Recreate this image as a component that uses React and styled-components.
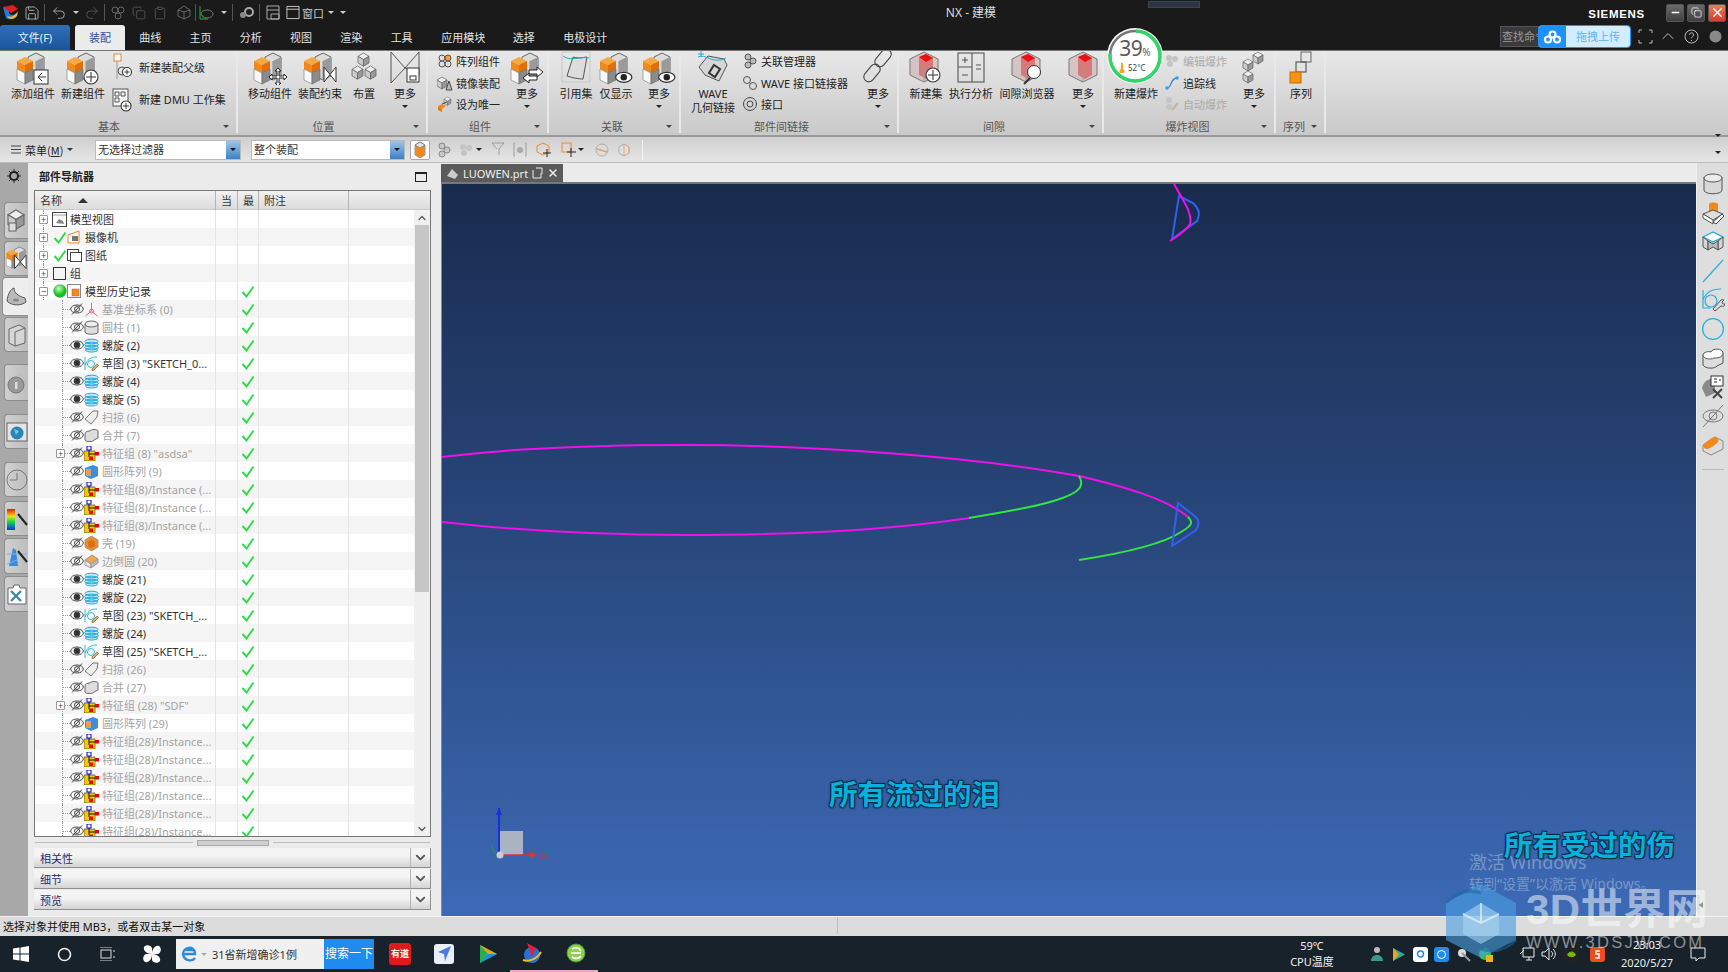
import React from "react";
import styled, { createGlobalStyle } from "styled-components";
import { Save, Undo2, Redo2, Copy, Clipboard, X, Minus, ChevronUp, ChevronDown } from "lucide-react";

const FONT = `"Noto Sans", "Noto Sans CJK SC", sans-serif`;

const Global = createGlobalStyle`
  html, body { margin: 0; padding: 0; background: #1a1a1a; }
  * { box-sizing: border-box; }
  body { font-family: ${FONT}; font-size: 11px; }
`;

const Page = styled.div`
  position: relative;
  width: 1728px;
  height: 972px;
  overflow: hidden;
  display: flex;
  flex-direction: column;
`;

/* ---------- title bar ---------- */
const TitleBar = styled.div`
  height: 25px;
  background: #1a1a1a;
  display: flex;
  align-items: center;
  color: #eee;
  position: relative;
`;
const Quick = styled.div`
  width: ${(p) => p.$w}px;
  height: 25px;
  flex: none;
  display: flex;
  align-items: center;
  justify-content: center;
  color: ${(p) => p.$color || "#8c8c8c"};
  font-size: 11px;
`;
const QuickSep = styled.div`
  width: 1px;
  height: 17px;
  background: #555;
  flex: none;
`;
const Caret = styled.span`
  display: inline-block;
  width: 0;
  height: 0;
  border-left: 3px solid transparent;
  border-right: 3px solid transparent;
  border-top: 3px solid ${(p) => p.$color || "#ccc"};
`;
const AppTitle = styled.div`
  position: absolute;
  left: 935px;
  top: 3px;
  width: 72px;
  text-align: center;
  font-size: 12px;
  color: #ddd;
`;
const TinyMeter = styled.div`
  position: absolute;
  left: 1148px;
  top: 1px;
  width: 52px;
  height: 7px;
  background: #2b3440;
  border: 1px solid #3b4652;
`;
const RightTitle = styled.div`
  margin-left: auto;
  display: flex;
  align-items: center;
  padding-right: 2px;
`;
const Brand = styled.div`
  font-family: "Liberation Sans", sans-serif;
  font-weight: 700;
  font-size: 11.5px;
  letter-spacing: 0.7px;
  color: #fff;
  margin-right: 18px;
  margin-top: 3px;
`;
const WinBtn = styled.div`
  width: 18px;
  height: 18px;
  margin-left: 3px;
  border-radius: 2px;
  background: ${(p) => (p.$close ? "linear-gradient(#f07a5a,#d0402a)" : "linear-gradient(#6a6a6a,#3f3f3f)")};
  border: 1px solid #555;
  display: flex;
  align-items: center;
  justify-content: center;
  color: #fff;
`;

/* ---------- tabs ---------- */
const TabRow = styled.div`
  height: 25px;
  background: #1a1a1a;
  display: flex;
  align-items: stretch;
`;
const FileTab = styled.div`
  width: 70px;
  padding-bottom: 2px;
  background: linear-gradient(#2f6fb8, #1c5498);
  border-radius: 3px 3px 0 0;
  color: #e8f0fa;
  display: flex;
  align-items: center;
  justify-content: center;
  font-size: 11px;
`;
const Tab = styled.div`
  width: ${(p) => p.$w || 50.3}px;
  margin-left: ${(p) => p.$ml || 0}px;
  padding-bottom: 2px;
  display: flex;
  align-items: center;
  justify-content: center;
  font-size: 11px;
  color: ${(p) => (p.$active ? "#2a4f96" : "#e4e4e4")};
  background: ${(p) => (p.$active ? "#ececec" : "transparent")};
  border-radius: 3px 3px 0 0;
`;
const SearchCmd = styled.div`
  position: absolute;
  left: 1500px;
  top: 26px;
  width: 40px;
  height: 21px;
  background: #3a3a3a;
  border: 1px solid #555;
  color: #999;
  font-size: 11px;
  line-height: 19px;
  padding-left: 1px;
  overflow: hidden;
  white-space: nowrap;
`;
const Upload = styled.div`
  position: absolute;
  left: 1538px;
  top: 25px;
  width: 93px;
  height: 23px;
  display: flex;
  border-radius: 4px;
  overflow: hidden;
  background: #d3edff;
  border: 1px solid #1e90ff;
`;
const UploadLogo = styled.div`
  width: 27px;
  background: #1e90ff;
  display: flex;
  align-items: center;
  justify-content: center;
`;
const UploadText = styled.div`
  flex: 1;
  text-align: center;
  line-height: 21px;
  font-size: 11px;
  color: #5fb5f5;
`;
const Corner = styled.div`
  position: absolute;
  top: 26px;
  left: ${(p) => p.$x}px;
  width: 20px;
  height: 20px;
  display: flex;
  align-items: center;
  justify-content: center;
  color: #bbb;
`;

/* ---------- ribbon ---------- */
const Ribbon = styled.div`
  position: relative;
  height: 87px;
  background: linear-gradient(#e8e8e8, #c9c9c9);
  border-top: 1px solid #777;
  border-bottom: 2px solid #9a9a9a;
  display: flex;
`;
const Group = styled.div`
  width: ${(p) => p.$w}px;
  flex: none;
  padding-top: 1px;
  display: flex;
  flex-direction: column;
  border-right: 2px solid #e9e9e9;
  height: 82px;
`;
const GroupBody = styled.div`
  height: 68px;
  display: flex;
  padding-left: ${(p) => p.$pl || 0}px;
`;
const GroupFoot = styled.div`
  position: relative;
  height: 13px;
  line-height: 13px;
  text-align: center;
  color: #555;
  font-size: 11px;
  padding-right: ${(p) => p.$pr || 0}px;
`;
const FootCaret = styled.span`
  position: absolute;
  right: 7px;
  top: 5px;
  width: 0;
  height: 0;
  border-left: 3px solid transparent;
  border-right: 3px solid transparent;
  border-top: 3px solid #444;
`;
const BigTool = styled.div`
  width: ${(p) => p.$w || 50}px;
  flex: none;
  display: flex;
  flex-direction: column;
  align-items: center;
  color: #222;
  font-size: 11px;
  line-height: 14px;
`;
const BigIcon = styled.div`
  height: 33px;
  margin-bottom: 2px;
  display: flex;
  align-items: flex-end;
  justify-content: center;
`;
const BigLabel = styled.div`
  white-space: pre;
  text-align: center;
`;
const MoreCaret = styled(Caret)`
  margin-top: 4px;
`;
const SmallCol = styled.div`
  display: flex;
  flex-direction: column;
  flex: none;
  width: ${(p) => p.$w}px;
  margin-left: ${(p) => p.$ml || 0}px;
  padding-top: ${(p) => p.$pt ?? 0}px;
  gap: ${(p) => p.$gap ?? 3}px;
`;
const SmallTool = styled.div`
  display: flex;
  align-items: center;
  gap: ${(p) => p.$gap ?? 3}px;
  height: ${(p) => p.$h || 18.5}px;
  white-space: nowrap;
  color: ${(p) => (p.$dim ? "#aaa" : "#222")};
  font-size: 11px;
`;
const Gauge = styled.div`
  position: absolute;
  left: 1106px;
  top: -24px;
  width: 58px;
  height: 58px;
`;
const GaugeNum = styled.div`
  position: absolute;
  left: 0;
  right: 0;
  top: 10px;
  text-align: center;
  font-size: 21px;
  line-height: 22px;
  color: #5a5a5a;
  letter-spacing: -0.5px;
  small {
    font-size: 10px;
    letter-spacing: 0;
  }
`;
const GaugeTemp = styled.div`
  position: absolute;
  left: 13px;
  top: 35px;
  font-size: 8px;
  line-height: 10px;
  color: #444;
  display: flex;
  align-items: center;
  gap: 3px;
`;
const RibbonEnd = styled.div`
  margin-left: auto;
  padding: 74px 7px 0 0;
`;

/* ---------- filter bar ---------- */
const FilterBar = styled.div`
  height: 26px;
  background: linear-gradient(#cfcfcf, #e6e6e6);
  display: flex;
  align-items: center;
  border-bottom: 1px solid #bbb;
`;
const MenuBtn = styled.div`
  width: 95px;
  padding-left: 11px;
  display: flex;
  align-items: center;
  gap: 4px;
  color: #222;
  font-size: 11px;
`;
const MenuName = styled.span`
  font-family: "Noto Sans CJK SC", sans-serif;
  u {
    text-decoration: underline;
  }
`;
const Combo = styled.div`
  width: ${(p) => p.$w}px;
  height: 20px;
  margin-right: ${(p) => p.$mr || 0}px;
  flex: none;
  display: flex;
  background: #fff;
  border: 1px solid #bbb;
  color: #333;
  font-size: 11px;
  line-height: 18px;
  padding-left: 2px;
  justify-content: space-between;
`;
const ComboBtn = styled.div`
  width: 14px;
  background: linear-gradient(#9dc4ea, #3d82c4);
  display: flex;
  align-items: center;
  justify-content: center;
`;
const SelectBtn = styled.div`
  width: 20px;
  height: 20px;
  margin: 0 3px 0 5px;
  background: #fff;
  border: 1px solid #aaa;
  border-radius: 2px;
  display: flex;
  align-items: center;
  justify-content: center;
`;
const FilterIcon = styled.div`
  width: ${(p) => p.$w || 22}px;
  flex: none;
  display: flex;
  align-items: center;
  gap: 2px;
  justify-content: center;
  opacity: ${(p) => p.$op || 1};
`;
const BarSep = styled.div`
  width: 1px;
  height: 20px;
  background: #f4f4f4;
  margin-left: 11px;
`;
const BarEnd = styled.div`
  margin-left: auto;
  padding-right: 7px;
`;

/* ---------- main ---------- */
const Main = styled.div`
  height: 753px;
  display: flex;
  background: #e8e8e8;
`;
const Rail = styled.div`
  width: 28px;
  flex: none;
  background: #a8a8a8;
  display: flex;
  flex-direction: column;
  align-items: flex-end;
`;
const RailGear = styled.div`
  height: 26px;
  width: 28px;
  margin-bottom: 13px;
  display: flex;
  align-items: center;
  justify-content: center;
  color: #333;
`;
const RailTab = styled.div`
  width: ${(p) => (p.$active ? 26 : 24)}px;
  height: ${(p) => p.$h}px;
  margin-top: ${(p) => p.$mt || 0}px;
  background: ${(p) => (p.$active ? "#eeeeee" : "linear-gradient(90deg,#d0d0d0,#bdbdbd)")};
  border: 1px solid #8c8c8c;
  border-right: none;
  border-radius: 4px 0 0 4px;
  display: flex;
  align-items: center;
  justify-content: center;
`;

const NavPanel = styled.div`
  width: 413px;
  flex: none;
  background: #ebebeb;
  padding: 0 10px 0 6px;
  display: flex;
  flex-direction: column;
`;
const PanelHead = styled.div`
  height: 27px;
  padding: 0 4px 2px 5px;
  display: flex;
  align-items: center;
  justify-content: space-between;
  font-size: 11px;
  font-weight: 700;
  color: #222;
`;
const RestoreBox = styled.div`
  width: 12px;
  height: 10px;
  margin-top: 3px;
  border: 1px solid #222;
  border-top-width: 2px;
`;
const TreeBox = styled.div`
  height: 647px;
  border: 1px solid #777;
  background: #fff;
  display: flex;
  flex-direction: column;
`;
const COLS = "181px 22px 21px 90px 1fr";
const TreeHead = styled.div`
  height: 19px;
  flex: none;
  display: grid;
  grid-template-columns: ${COLS};
  background: linear-gradient(#f2f2f2, #dcdcdc);
  border-bottom: 1px solid #ccc;
  color: #333;
  font-size: 11px;
  line-height: 19px;
`;
const HeadCell = styled.div`
  border-right: 1px solid #b4b4b4;
  padding-left: 5px;
  display: flex;
  align-items: center;
  gap: 16px;
`;
const SortUp = styled.span`
  width: 0;
  height: 0;
  border-left: 5px solid transparent;
  border-right: 5px solid transparent;
  border-bottom: 5px solid #333;
`;
const TreeBody = styled.div`
  flex: 1;
  display: flex;
  min-height: 0;
`;
const RowList = styled.div`
  width: 379px;
  flex: none;
  overflow: hidden;
`;
const Row = styled.div`
  height: 18px;
  display: grid;
  grid-template-columns: ${COLS};
  background: ${(p) => (p.$odd ? "#f5f5f5" : "#fff")};
`;
const Cell = styled.div`
  border-right: 1px solid #e4e4e4;
  display: flex;
  align-items: center;
  justify-content: center;
`;
const NameCell = styled.div`
  position: relative;
  border-right: 1px solid #e4e4e4;
  display: flex;
  align-items: center;
  padding-left: ${(p) => (p.$level ? 21 : 4)}px;
  white-space: nowrap;
  overflow: hidden;
  color: ${(p) => (p.$dim ? "#a3a3a3" : "#333")};
  font-size: 11px;
  &::before {
    content: "";
    position: absolute;
    top: 0;
    bottom: 0;
    left: ${(p) => (p.$level ? 27 : 8)}px;
    border-left: 1px dotted #999;
  }
  &::after {
    content: "";
    position: absolute;
    top: 9px;
    width: 8px;
    left: 27px;
    border-top: ${(p) => (p.$level ? "1px dotted #999" : "none")};
  }
`;
const Expander = styled.span`
  position: relative;
  z-index: 1;
  width: 9px;
  height: 9px;
  flex: none;
  margin-right: ${(p) => (p.$level ? 5 : 4)}px;
  border: 1px solid ${(p) => (p.$empty ? "transparent" : "#999")};
  background: ${(p) => (p.$empty ? "transparent" : "#fff")};
  border-radius: 1px;
  display: flex;
  align-items: center;
  justify-content: center;
  color: #444;
  font-size: 9px;
  line-height: 7px;
`;
const RowIcon = styled.span`
  position: relative;
  z-index: 1;
  width: ${(p) => p.$w || 15}px;
  height: 16px;
  flex: none;
  display: flex;
  align-items: center;
  justify-content: center;
`;
const RowText = styled.span`
  margin-left: 3px;
`;
const ScrollBar = styled.div`
  flex: 1;
  background: #f0f0f0;
  display: flex;
  flex-direction: column;
  align-items: center;
  padding: 0 1px;
`;
const ScrollArrow = styled.div`
  height: 15px;
  flex: none;
  display: flex;
  align-items: center;
  justify-content: center;
  color: #555;
`;
const ScrollThumb = styled.div`
  width: 100%;
  height: 367px;
  flex: none;
  background: #c6c6c6;
`;
const ScrollFill = styled.div`
  flex: 1;
`;
const Sash = styled.div`
  height: 11px;
  flex: none;
  display: flex;
  align-items: center;
  padding: 0 1px;
`;
const SashLine = styled.div`
  flex: 1;
  height: 1px;
  background: #bdbdbd;
`;
const SashGrip = styled.div`
  width: 72px;
  height: 6px;
  margin: 0 4px;
  background: #cfcfcf;
  border: 1px solid #aaa;
`;
const Fold = styled.div`
  height: 20px;
  margin-bottom: 1px;
  flex: none;
  display: flex;
  align-items: center;
  background: linear-gradient(#f4f4f4 40%, #d4d4d4);
  border-bottom: 1px solid #8f8f8f;
  border-right: 1px solid #8f8f8f;
  color: #2b2b6b;
  font-size: 11px;
  padding-left: 6px;
`;
const FoldChevron = styled.div`
  margin-left: auto;
  width: 20px;
  height: 100%;
  border-left: 1px solid #b4b4b4;
  display: flex;
  align-items: center;
  justify-content: center;
  color: #555;
`;

/* ---------- viewport ---------- */
const Center = styled.div`
  flex: 1;
  display: flex;
  flex-direction: column;
  min-width: 0;
`;
const DocStrip = styled.div`
  height: 21px;
  flex: none;
  background: #ececec;
  border-bottom: 2px solid #777;
  display: flex;
`;
const DocTab = styled.div`
  width: 122px;
  margin-top: 1px;
  background: #5b5b5b;
  color: #f0f0f0;
  font-size: 11px;
  display: flex;
  align-items: center;
  gap: 4px;
  padding-left: 5px;
`;
const Viewport = styled.div`
  position: relative;
  flex: 1;
  background: linear-gradient(#192b4d, #2b4c84 55%, #3d6ab6);
  border-left: 1px solid #888;
  overflow: hidden;
`;
const Drawing = styled.svg`
  position: absolute;
  inset: 0;
`;
const Subtitle = styled.div`
  position: absolute;
  left: ${(p) => p.$x}px;
  top: ${(p) => p.$y}px;
  font-family: "Noto Sans CJK SC", sans-serif;
  font-size: 28.5px;
  line-height: 36px;
  font-weight: 700;
  color: #08b0dc;
  white-space: nowrap;
  text-shadow: 1px 1px 1px #0b2a44, -1px -1px 1px #0b2a44, 1px -1px 1px #0b2a44, -1px 1px 1px #0b2a44;
`;
const Activate = styled.div`
  position: absolute;
  left: 1027px;
  top: 666px;
  color: rgba(255, 255, 255, 0.32);
  font-size: 18px;
  line-height: 24px;
  small {
    display: block;
    font-size: 14px;
    line-height: 20px;
  }
`;
const RightBar = styled.div`
  width: 32px;
  flex: none;
  background: #dedede;
  border-left: 1px solid #f0f0f0;
  display: flex;
  flex-direction: column;
  align-items: center;
  padding-top: 8px;
  gap: 3px;
`;
const RightTool = styled.div`
  width: 26px;
  height: 26px;
  flex: none;
  display: flex;
  align-items: center;
  justify-content: center;
`;
const RightEnd = styled.div`
  width: 22px;
  height: 1px;
  background: #bbb;
  margin-top: 8px;
`;
const Nudge = styled.div`
  margin-top: auto;
  margin-bottom: 8px;
  margin-right: 24px;
  width: 0;
  height: 0;
  border-top: 3px solid transparent;
  border-bottom: 3px solid transparent;
  border-right: 4px solid #222;
`;

/* ---------- status + taskbar ---------- */
const StatusBar = styled.div`
  height: 20px;
  flex: none;
  background: #dcdcdc;
  border-top: 1px solid #f2f2f2;
  display: flex;
  align-items: center;
  padding: 0 0 2px 3px;
  color: #111;
  font-size: 11px;
`;
const StatusSep = styled.div`
  width: 1px;
  height: 100%;
  background: #bbb;
  margin-left: auto;
  margin-right: ${(p) => p.$mr}px;
`;
const Taskbar = styled.div`
  flex: 1;
  background: #17222a;
  display: flex;
  align-items: center;
  color: #f0f0f0;
`;
const TaskSlot = styled.div`
  position: relative;
  width: ${(p) => p.$w}px;
  margin-left: ${(p) => p.$ml || 0}px;
  height: 36px;
  flex: none;
  display: flex;
  align-items: center;
  justify-content: center;
  ${(p) => p.$open && "border-bottom: 2px solid #e8a9c0;"}
`;
const SearchBox = styled.div`
  width: 198px;
  height: 30px;
  flex: none;
  display: flex;
  background: #f0f0f0;
  color: #333;
  font-size: 11px;
  align-items: center;
  margin-right: 4px;
`;
const SearchIcon = styled.div`
  width: 36px;
  padding-left: 4px;
  flex: none;
  display: flex;
  align-items: center;
  gap: 3px;
`;
const SearchGo = styled.div`
  margin-left: auto;
  width: 50px;
  height: 100%;
  background: #1e8cf0;
  color: #fff;
  text-align: center;
  line-height: 30px;
  font-size: 12px;
`;
const YoudaoTile = styled.div`
  width: 22px;
  height: 22px;
  background: #e01a1a;
  border-radius: 3px;
  color: #fff;
  font-size: 9px;
  font-weight: 700;
  line-height: 22px;
  text-align: center;
  white-space: nowrap;
`;
const TempBlock = styled.div`
  width: 70px;
  margin-left: 679px;
  margin-right: 19px;
  flex: none;
  text-align: center;
  font-size: 11px;
  line-height: 16px;
`;
const ClockBlock = styled.div`
  width: 70px;
  flex: none;
  margin-left: 1px;
  text-align: center;
  font-size: 11px;
  line-height: 18px;
`;
const Mark = styled.div`
  position: absolute;
  left: 1445px;
  top: 883px;
  display: flex;
  gap: 9px;
  pointer-events: none;
`;
const MarkText = styled.div`
  color: rgba(255, 255, 255, 0.52);
  font-family: "Liberation Sans", "Noto Sans CJK SC", sans-serif;
  font-weight: 700;
  font-size: 42px;
  line-height: 50px;
  padding-top: 2px;
  letter-spacing: 0.5px;
  white-space: nowrap;
  small {
    display: block;
    font-size: 16.5px;
    line-height: 20px;
    font-weight: 400;
    letter-spacing: 2.3px;
    margin-top: -3px;
    color: rgba(255, 255, 255, 0.5);
  }
`;

/* ---------- drawings ---------- */
const Blocks = () => (
  <>
    <polygon points="13,6 21,2 29,6 29,25 21,29 13,25" fill="#dcdcdc" stroke="#666" />
    <line x1="21" y1="10" x2="21" y2="29" stroke="#888" />
    <polygon points="21,10 29,6 29,25 21,29" fill="#9a9a9a" />
    <polygon points="2,10 10,6 18,10 10,14" fill="#f7a941" />
    <polygon points="2,10 10,14 10,22 2,18" fill="#f08a1c" />
    <polygon points="10,14 18,10 18,18 10,22" fill="#df6f06" />
    <polygon points="2,18 10,22 10,33 2,29" fill="#f8f8f8" stroke="#777" strokeWidth=".6" />
    <polygon points="10,22 18,18 18,29 10,33" fill="#8b8b8b" stroke="#666" strokeWidth=".6" />
  </>
);
const GrayCube = ({ x = 0, y = 0, s = 1 }) => (
  <g transform={`translate(${x} ${y}) scale(${s})`}>
    <polygon points="0,3 5,0 10,3 5,6" fill="#eee" stroke="#666" strokeWidth=".7" />
    <polygon points="0,3 5,6 5,12 0,9" fill="#ccc" stroke="#666" strokeWidth=".7" />
    <polygon points="5,6 10,3 10,9 5,12" fill="#999" stroke="#666" strokeWidth=".7" />
  </g>
);
const Plus = ({ cx, cy, r = 6.5 }) => (
  <g>
    <circle cx={cx} cy={cy} r={r} fill="#fff" stroke="#333" strokeWidth="1.1" />
    <path d={`M${cx - r + 2} ${cy}h${2 * r - 4}M${cx} ${cy - r + 2}v${2 * r - 4}`} stroke="#333" strokeWidth="1" />
  </g>
);
const Tie = ({ x = 22, y = 16 }) => (
  <path d={`M${x} ${y}l12 15v-15l-12 15z`} fill="#fff" stroke="#333" strokeWidth="1" />
);
const Svg = ({ w = 36, h = 34, vb, children }) => (
  <svg width={w} height={h} viewBox={vb || `0 0 ${w} ${h}`}>
    {children}
  </svg>
);
const EyeShape = ({ x = 0, y = 0, s = 1 }) => (
  <g transform={`translate(${x} ${y}) scale(${s})`}>
    <ellipse cx="7" cy="5" rx="6.5" ry="4" fill="#fff" stroke="#333" />
    <circle cx="7" cy="5" r="2.6" fill="#222" />
  </g>
);
const ClearBox = ({ extra }) => (
  <>
    <polygon points="16,1 30,8 30,24 16,31 2,24 2,8" fill="#d6c4c4" stroke="#777" />
    <polygon points="11,6 18,3 25,7 25,24 18,28 11,24" fill="#d97a7a" />
    <polygon points="11,6 18,3 25,7 18,11" fill="#e81010" />
    <line x1="16" y1="16" x2="16" y2="31" stroke="#999" />
    {extra}
  </>
);

const BIG = {
  add: <Svg><Blocks /><rect x="19" y="19" width="14" height="14" fill="#fff" stroke="#333" /><path d="M31 26H24M27 22l-4 4 4 4" fill="none" stroke="#333" /></Svg>,
  newc: <Svg><Blocks /><Plus cx={26} cy={26} r={7} /></Svg>,
  move: <Svg><Blocks /><path d="M26 17l3 3h-2v5h5v-2l3 3-3 3v-2h-5v5h2l-3 3-3-3h2v-5h-5v2l-3-3 3-3v2h5v-5h-2z" fill="#fff" stroke="#222" /></Svg>,
  cons: <Svg><Blocks /><Tie /></Svg>,
  layout: <Svg w={28}><GrayCube x={8} y={2} s={1.1} /><GrayCube x={2} y={15} s={1.1} /><GrayCube x={15} y={15} s={1.1} /></Svg>,
  more1: <Svg w={30}><path d="M1 1l14 16L29 1v24L15 17 1 32z" fill="none" stroke="#555" /><rect x="17" y="17" width="12" height="14" fill="#fff" stroke="#333" /><rect x="20" y="25" width="6" height="4" fill="none" stroke="#333" /></Svg>,
  more2: <Svg><Blocks /><path d="M20 19h8v-3l6 5-6 5v-3h-8z" fill="#fff" stroke="#222" /><path d="M14 27l6-5v3h8v4h-8v3z" fill="#fff" stroke="#222" /></Svg>,
  ref: <Svg w={30}><rect x="1" y="1" width="28" height="30" fill="none" stroke="#c8c8c8" /><path d="M12 6c7 2 11 0 14 0l-4 22c-4 0-10-1-16-3z" fill="#ddd" stroke="#555" /><path d="M2 5c8 6 16 0 26 2" fill="none" stroke="#29a9c9" /></Svg>,
  show: <Svg><Blocks /><EyeShape x={17} y={20} s={1.25} /></Svg>,
  wave: <Svg w={34}><path d="M12 5l16 3 3 6-8 16-14-6-6-8z" fill="#d6d6d6" stroke="#555" /><path d="M2 6c8-4 14 8 28 1" fill="none" stroke="#29a9d9" /><path d="M2 3h6M5 0v6" stroke="#29a9d9" /><path d="M18 14l6 4-5 8-6-4z" fill="none" stroke="#333" strokeWidth="2" /></Svg>,
  chain: <Svg w={30}><g fill="none" stroke="#444" strokeWidth="1.1"><rect x="15" y="-3" width="10" height="20" rx="5" transform="rotate(40 20 7)" /><rect x="4" y="12" width="10" height="20" rx="5" transform="rotate(40 9 22)" /></g></Svg>,
  newset: <Svg><ClearBox extra={<Plus cx={25} cy={24} r={7} />} /></Svg>,
  calc: <Svg w={28}><g fill="none" stroke="#555" strokeWidth="1.1"><rect x="1" y="2" width="26" height="29" /><path d="M15 2v29M1 16h14" /><path d="M5 9h6M8 6v6M5 24h6M19 14h5M19 18h5" /></g></Svg>,
  browse: <Svg w={34}><ClearBox extra={<><circle cx="24" cy="21" r="6.5" fill="#fff" stroke="#333" /><line x1="20" y1="27" x2="14" y2="33" stroke="#333" strokeWidth="2" /></>} /></Svg>,
  clear: <Svg w={32}><ClearBox /></Svg>,
  cubes: <Svg w={24}><GrayCube x={11} y={1} /><GrayCube x={1} y={8} /><GrayCube x={1} y={20} /></Svg>,
  seq: <Svg w={24}><rect x="12" y="1" width="10" height="10" fill="none" stroke="#666" /><rect x="7" y="11" width="10" height="10" fill="none" stroke="#444" /><rect x="1" y="21" width="11" height="11" fill="#f59314" stroke="#c86a00" /></Svg>,
};

const SMALL = {
  parent: <Svg w={20} h={28}><rect x="2" y="1" width="7" height="7" fill="#fff" stroke="#e8842b" /><path d="M5 8v18" stroke="#999" /><circle cx="10" cy="18" r="4" fill="none" stroke="#555" /><Plus cx={15} cy={19} r={4.5} /></Svg>,
  dmu: <Svg w={20} h={28}><rect x="1" y="4" width="15" height="17" fill="#f4f4f4" stroke="#555" /><path d="M3 7h4v4H3zM9 7h4v4H9zM3 13h4v4H3z" fill="none" stroke="#555" /><Plus cx={14} cy={21} r={5} /></Svg>,
  array: <Svg w={16} h={16}><circle cx="5" cy="5" r="3" fill="#ddd" stroke="#555" /><circle cx="11" cy="5" r="3" fill="#f5a030" stroke="#555" /><circle cx="5" cy="11" r="3" fill="#ddd" stroke="#555" /><circle cx="11" cy="11" r="3" fill="#ddd" stroke="#555" /></Svg>,
  mirror: <Svg w={16} h={16}><GrayCube x={0} y={2} s={1} /><path d="M9 15l3-9 3 9z" fill="#bbb" stroke="#444" /></Svg>,
  uniq: <Svg w={16} h={16}><polygon points="1,10 5,8 9,10 5,13" fill="#f08a1c" /><polygon points="1,10 5,13 5,16 1,14" fill="#e57a0a" /><GrayCube x={7} y={1} s={0.7} /><path d="M5 8l5-2" stroke="#444" /></Svg>,
  assoc: <Svg w={16} h={16}><g fill="#bbb" stroke="#555"><circle cx="6" cy="4" r="3" /><circle cx="11" cy="8" r="3" /><circle cx="6" cy="12" r="3" /></g></Svg>,
  wavei: <Svg w={16} h={16}><g fill="none" stroke="#555"><circle cx="5" cy="5" r="3.5" /><circle cx="11" cy="11" r="3.5" /><path d="M7 7l2 2" /></g></Svg>,
  iface: <Svg w={16} h={16}><g fill="none" stroke="#444"><circle cx="8" cy="8" r="6.5" /><circle cx="8" cy="8" r="3" /></g></Svg>,
  edit: <Svg w={16} h={16}><g fill="#c4c4c4"><circle cx="5" cy="5" r="3" /><circle cx="11" cy="6" r="3" /><circle cx="6" cy="11" r="3" /></g></Svg>,
  trace: <Svg w={16} h={16}><path d="M3 13c5 0 3-10 10-10" fill="none" stroke="#2f7fd0" strokeWidth="1.3" /><circle cx="3" cy="13" r="1.8" fill="#29a9e0" /><circle cx="13" cy="3" r="1.8" fill="#29a9e0" /></Svg>,
  auto: <Svg w={16} h={16}><g fill="#c4c4c4"><circle cx="5" cy="4" r="3" /><circle cx="5" cy="11" r="3" /></g><path d="M8 14l6-7" stroke="#c9b48a" strokeWidth="2" /></Svg>,
};

const TREE = {
  view: <Svg w={15} h={15}><rect x=".5" y=".5" width="14" height="14" fill="#fff" stroke="#444" /><path d="M.5 3h14" stroke="#444" strokeDasharray="1 1" /><path d="M4 11l3-4 4 2 1 3z" fill="#888" /></Svg>,
  camera: <Svg w={15} h={15}><path d="M1 13V5l11-4v12z" fill="#fff" stroke="#ee8a2a" /><rect x="5" y="6" width="6" height="5" fill="#777" /></Svg>,
  drawing: <Svg w={15} h={15}><rect x=".5" y="1.5" width="11" height="11" fill="#fff" stroke="#444" /><rect x="3.5" y="4.5" width="11" height="9" fill="#fff" stroke="#444" /></Svg>,
  group: <Svg w={15} h={15}><rect x="1.5" y="1.5" width="12" height="12" fill="none" stroke="#333" /></Svg>,
  history: <Svg w={15} h={15}><rect x=".5" y=".5" width="13" height="13" fill="#fff" stroke="#888" /><rect x="5" y="5" width="7" height="7" fill="#f08a1c" stroke="#b55" strokeWidth=".5" /></Svg>,
  datum: <Svg w={15} h={15}><g stroke="#e06a8a" fill="none"><path d="M7.5 1v8M7.5 9L1.5 14M7.5 9l6 5" /><circle cx="7.5" cy="9" r="2" /></g></Svg>,
  cyl: <Svg w={15} h={15}><path d="M1 4v8c0 3 13 3 13 0V4" fill="#ddd" stroke="#666" /><ellipse cx="7.5" cy="4" rx="6.5" ry="3" fill="#eee" stroke="#666" /></Svg>,
  helix: <Svg w={15} h={15}><ellipse cx="7.5" cy="7.5" rx="7" ry="6.5" fill="#bfeaf5" /><g fill="none" stroke="#1fa8d8" strokeWidth="1"><ellipse cx="7.5" cy="3.5" rx="6.5" ry="2.3" /><ellipse cx="7.5" cy="6.5" rx="6.8" ry="2.3" /><ellipse cx="7.5" cy="9.5" rx="6.8" ry="2.3" /><ellipse cx="7.5" cy="12" rx="6" ry="2" /></g></Svg>,
  sketch: <Svg w={15} h={15}><path d="M1 1v13M1 9c4-8 8-8 12-8" fill="none" stroke="#2bb3dc" /><circle cx="7" cy="8" r="3.5" fill="none" stroke="#2bb3dc" /><path d="M8 13l5-5 1.5 1.5-5 5H8z" fill="#e0b040" stroke="#555" strokeWidth=".6" /></Svg>,
  sweep: <Svg w={15} h={15}><path d="M1 9l8-8h5l-1 6-6 7z" fill="#eee" stroke="#777" /></Svg>,
  unite: <Svg w={15} h={15}><path d="M1 6v6c0 2 9 2 9 0l4-2V3c0-2-8-2-8 0C3 3 1 4 1 6z" fill="#ddd" stroke="#666" /></Svg>,
  feat: <Svg w={15} h={15}><rect x="0" y="5" width="11" height="10" fill="#f5c800" stroke="#333" strokeWidth=".6" /><path d="M5 3v8M5 8h7" stroke="#111" /><rect x="3" y="0" width="4" height="4" fill="#fff" stroke="#00c" /><rect x="11" y="6" width="4" height="3.5" fill="#e00" /><rect x="5" y="10.5" width="4" height="3.5" fill="#e00" /></Svg>,
  pattern: <Svg w={15} h={15}><polygon points="1,4 9,1 14,3 14,12 7,15 1,12" fill="#3b8ee0" /><rect x="2" y="5" width="5" height="7" fill="#e8a050" /></Svg>,
  shell: <Svg w={15} h={15}><polygon points="7.5,0 14,4 14,11 7.5,15 1,11 1,4" fill="#ee8a2a" stroke="#999" /><polygon points="7.5,4 11,6 11,10 7.5,12 4,10 4,6" fill="#d97010" /></Svg>,
  blend: <Svg w={15} h={15}><polygon points="1,6 8,1 14,5 7,10" fill="#f5a550" stroke="#999" /><polygon points="1,6 7,10 7,14 1,11" fill="#e5e5e5" stroke="#999" /><polygon points="7,10 14,5 14,9 7,14" fill="#bbb" stroke="#999" /></Svg>,
};

const Eye = ({ off }) => (
  <Svg w={14} h={12}>
    <ellipse cx="7" cy="6" rx="6.3" ry="4" fill={off ? "none" : "#fff"} stroke="#444" />
    <circle cx="7" cy="6" r={off ? 2.5 : 3} fill={off ? "none" : "#333"} stroke="#444" />
    {off && <line x1="2" y1="11.5" x2="12" y2=".5" stroke="#444" />}
  </Svg>
);
const Tick = () => (
  <Svg w={14} h={13}>
    <polyline points="1.5,7 5.5,11.5 12.5,1.5" fill="none" stroke="#2bdc46" strokeWidth="1.9" />
  </Svg>
);

const rows = [
  { lv: 0, ex: "+", icon: "view", text: "模型视图" },
  { lv: 0, ex: "+", st: "check", icon: "camera", text: "摄像机" },
  { lv: 0, ex: "+", st: "check", icon: "drawing", text: "图纸" },
  { lv: 0, ex: "+", icon: "group", text: "组" },
  { lv: 0, ex: "−", st: "dot", icon: "history", text: "模型历史记录", tick: 1 },
  { off: 1, icon: "datum", text: "基准坐标系 (0)" },
  { off: 1, icon: "cyl", text: "圆柱 (1)" },
  { icon: "helix", text: "螺旋 (2)" },
  { icon: "sketch", text: `草图 (3) "SKETCH_0...` },
  { icon: "helix", text: "螺旋 (4)" },
  { icon: "helix", text: "螺旋 (5)" },
  { off: 1, icon: "sweep", text: "扫掠 (6)" },
  { off: 1, icon: "unite", text: "合并 (7)" },
  { off: 1, ex: "+", icon: "feat", text: `特征组 (8) "asdsa"` },
  { off: 1, icon: "pattern", text: "圆形阵列 (9)" },
  { off: 1, icon: "feat", text: "特征组(8)/Instance (..." },
  { off: 1, icon: "feat", text: "特征组(8)/Instance (..." },
  { off: 1, icon: "feat", text: "特征组(8)/Instance (..." },
  { off: 1, icon: "shell", text: "壳 (19)" },
  { off: 1, icon: "blend", text: "边倒圆 (20)" },
  { icon: "helix", text: "螺旋 (21)" },
  { icon: "helix", text: "螺旋 (22)" },
  { icon: "sketch", text: `草图 (23) "SKETCH_...` },
  { icon: "helix", text: "螺旋 (24)" },
  { icon: "sketch", text: `草图 (25) "SKETCH_...` },
  { off: 1, icon: "sweep", text: "扫掠 (26)" },
  { off: 1, icon: "unite", text: "合并 (27)" },
  { off: 1, ex: "+", icon: "feat", text: `特征组 (28) "SDF"` },
  { off: 1, icon: "pattern", text: "圆形阵列 (29)" },
  ...Array.from({ length: 6 }, () => ({ off: 1, icon: "feat", text: "特征组(28)/Instance..." })),
];

const TreeRow = ({ row, odd }) => {
  const level = row.lv === 0 ? 0 : 1;
  return (
    <Row $odd={odd}>
      <NameCell $level={level} $dim={row.off}>
        <Expander $level={level} $empty={!row.ex}>{row.ex}</Expander>
        {level === 1 && (
          <RowIcon $w={14}>
            <Eye off={row.off} />
          </RowIcon>
        )}
        {row.st === "check" && (
          <RowIcon><Tick /></RowIcon>
        )}
        {row.st === "dot" && (
          <RowIcon>
            <Svg w={14} h={14}>
              <defs>
                <radialGradient id="greenDot" cx="40%" cy="30%">
                  <stop offset="0" stopColor="#c8ffc0" />
                  <stop offset="1" stopColor="#18c020" />
                </radialGradient>
              </defs>
              <circle cx="7" cy="7" r="6.3" fill="url(#greenDot)" stroke="#1a8a20" strokeWidth=".5" />
            </Svg>
          </RowIcon>
        )}
        <RowIcon>{TREE[row.icon]}</RowIcon>
        <RowText>{row.text}</RowText>
      </NameCell>
      <Cell />
      <Cell>{(level === 1 || row.tick) && <Tick />}</Cell>
      <Cell />
      <div />
    </Row>
  );
};

const Big = ({ icon, label, w, more }) => (
  <BigTool $w={w}>
    <BigIcon>{BIG[icon]}</BigIcon>
    <BigLabel>{label}</BigLabel>
    {more && <MoreCaret $color="#222" />}
  </BigTool>
);
const Small = ({ icon, label, h, dim, gap }) => (
  <SmallTool $h={h} $dim={dim} $gap={gap}>
    {SMALL[icon]}
    {label}
  </SmallTool>
);
const RibbonGroup = ({ w, label, pl, pr, children }) => (
  <Group $w={w}>
    <GroupBody $pl={pl}>{children}</GroupBody>
    <GroupFoot $pr={pr}>
      {label}
      <FootCaret />
    </GroupFoot>
  </Group>
);

const RAIL = [
  { h: 37, icon: <Svg w={20} h={24}><GrayCube x={1} y={1} s={1.6} /><rect x="2" y="14" width="7" height="8" fill="#ddd" stroke="#666" /></Svg> },
  { h: 35, mt: 2, icon: <Svg w={24} h={28}><g transform="scale(.72)"><Blocks /></g><path d="M10 10l12 14V10L10 24z" fill="#fff" stroke="#333" /></Svg> },
  { h: 39, mt: 1, active: 1, icon: <Svg w={22} h={22}><path d="M2 15c1-8 4-12 7-13 0 5 4 8 11 10l1 4c-5 4-14 4-19-1z" fill="#bbb" stroke="#555" /><ellipse cx="11" cy="14" rx="3" ry="1.5" fill="#888" /></Svg> },
  { h: 35, mt: 1, icon: <Svg w={18} h={24}><path d="M1 6l10-4 6 3v15L7 23 1 20z" fill="#d6d6d6" stroke="#666" /><path d="M7 9v14M7 9l10-4" stroke="#666" fill="none" /></Svg> },
  { h: 37, mt: 12, icon: <Svg w={22} h={24}><circle cx="10" cy="14" r="8" fill="#999" stroke="#777" /><rect x="9" y="11" width="2.5" height="7" fill="#ddd" /><path d="M11 3c5 1 8 4 9 9" fill="none" stroke="#bbb" /></Svg> },
  { h: 35, mt: 13, icon: <Svg w={22} h={22}><rect x="1" y="2" width="20" height="18" fill="#e4e4e4" stroke="#666" /><circle cx="11" cy="12" r="6.5" fill="#2b86b8" /><path d="M8 8l5 2-3 4z" fill="#7fc4e0" /></Svg> },
  { h: 35, mt: 13, icon: <Svg w={22} h={22}><circle cx="11" cy="11" r="10" fill="none" stroke="#777" /><path d="M11 4v7H4" fill="none" stroke="#777" /></Svg> },
  { h: 35, mt: 4, icon: <Svg w={22} h={24}><defs><linearGradient id="rb" x1="0" y1="0" x2="0" y2="1"><stop offset="0" stopColor="#f01010" /><stop offset=".35" stopColor="#f0e010" /><stop offset=".6" stopColor="#10e040" /><stop offset="1" stopColor="#1030f0" /></linearGradient></defs><rect x="1" y="2" width="8" height="21" fill="url(#rb)" /><path d="M12 7l9 11" stroke="#222" strokeWidth="2" /></Svg> },
  { h: 36, mt: 2, icon: <Svg w={22} h={24}><path d="M3 22l4-18 3 2 2 16z" fill="#3a8ae0" /><path d="M1 10h20M1 20l10-4" stroke="#80b0e0" /><path d="M12 7l9 11" stroke="#222" strokeWidth="2" /></Svg> },
  { h: 36, mt: 2, icon: <Svg w={22} h={24}><path d="M2 6h5l1-3h5l1 3h6v16H2z" fill="#fff" stroke="#666" /><path d="M5 9l10 10M15 9L5 19" stroke="#3a8a9a" strokeWidth="2.4" /></Svg> },
];

const RIGHT = [
  <Svg w={22} h={24}><path d="M2 5v13c0 5 18 5 18 0V5" fill="#d8d8d8" stroke="#555" /><ellipse cx="11" cy="6" rx="9" ry="4" fill="#ececec" stroke="#555" /></Svg>,
  <Svg w={24} h={24}><path d="M8 3c0-2 9-2 9 0v8c0 2-9 2-9 0z" fill="#f08a1c" /><path d="M2 13l10-4 10 4-10 6z" fill="#ddd" stroke="#555" /><path d="M2 13v4l10 6v-4z" fill="#fff" stroke="#555" /><path d="M12 21l9-8 2 2-8 8z" fill="#fff" stroke="#444" /></Svg>,
  <Svg w={24} h={22}><path d="M2 6l10-5 10 5-10 5z" fill="#fff" stroke="#29a9d9" strokeWidth="1.3" /><path d="M2 6v10l5 3V10zM22 6v10l-5 3V10z" fill="#d6d6d6" stroke="#555" /><path d="M7 10l5 3 5-3v9l-5-3-5 3z" fill="#bbb" stroke="#555" /></Svg>,
  <Svg w={24} h={24}><line x1="2" y1="23" x2="22" y2="1" stroke="#29b0dc" strokeWidth="1.2" /></Svg>,
  <Svg w={24} h={24}><g fill="none" stroke="#29b0dc" strokeWidth="1.2"><path d="M2 2v18h8M2 12C5 3 12 1 20 1" /><circle cx="10" cy="13" r="6" /></g><path d="M12 21l8-9c2-1 3 0 3 0l-2 2 1 2h2c0 2-2 3-4 2l-6 5z" fill="#ddd" stroke="#555" /></Svg>,
  <Svg w={24} h={24}><circle cx="12" cy="12" r="10.4" fill="none" stroke="#29b0dc" strokeWidth="1.3" /></Svg>,
  <Svg w={24} h={24}><path d="M2 9v10c2 4 12 4 14 1l6-3V7" fill="#ddd" stroke="#555" /><path d="M2 9c0-3 6-4 8-3 1-4 12-4 12 1s-7 5-9 5c-3 2-11 1-11-3z" fill="#fff" stroke="#555" /></Svg>,
  <Svg w={24} h={24}><path d="M1 13C3 5 9 3 14 4v14l-9 4z" fill="#8a8a8a" /><rect x="10" y="1" width="12" height="10" fill="#fff" stroke="#333" /><path d="M12 14l9 9M21 14l-9 9" stroke="#444" strokeWidth="2" /><path d="M13 4h3M13 7h3M18 5h2" stroke="#222" /></Svg>,
  <Svg w={24} h={24}><ellipse cx="12" cy="12" rx="10" ry="6" fill="none" stroke="#777" /><circle cx="12" cy="12" r="4" fill="none" stroke="#777" /><line x1="2" y1="23" x2="22" y2="1" stroke="#777" /></Svg>,
  <Svg w={24} h={24}><path d="M2 12l12-8 8 4v8l-12 6-8-4z" fill="#ddd" stroke="#888" /><path d="M2 12c3-3 9-8 12-8 3 1 4 3 3 5-3 3-8 7-11 7-2 0-4-2-4-4z" fill="#f08a1c" /></Svg>,
];

export default function App() {
  return (
    <Page>
      <Global />
      <TitleBar>
        <Quick $w={20}>
          <Svg w={17} h={17}>
            <path d="M1 3l6 2c-1 5 2 8 8 4-1 5-7 8-11 5z" fill="#1e7fd8" />
            <path d="M1 3l10-2 5 4-7 4z" fill="#e02020" />
            <path d="M5 12c4 2 8 0 11-5l-1 5c-3 4-8 4-10 0z" fill="#f0c020" />
          </Svg>
        </Quick>
        <Quick $w={24} $color="#bbb"><Save size={16} strokeWidth={1.3} /></Quick>
        <QuickSep />
        <Quick $w={27} $color="#aaa"><Undo2 size={16} strokeWidth={1.4} /></Quick>
        <Quick $w={8}><Caret /></Quick>
        <Quick $w={24} $color="#555"><Redo2 size={16} strokeWidth={1.4} /></Quick>
        <QuickSep />
        <Quick $w={26} $color="#666">
          <Svg w={14} h={14}><g fill="none" stroke="#666"><circle cx="4" cy="4" r="3" /><circle cx="10" cy="4" r="3" /><circle cx="7" cy="10" r="3" /></g></Svg>
        </Quick>
        <Quick $w={16} $color="#666"><Copy size={14} strokeWidth={1.2} /></Quick>
        <Quick $w={26} $color="#666"><Clipboard size={14} strokeWidth={1.2} /></Quick>
        <Quick $w={22} $color="#666">
          <Svg w={15} h={15}><path d="M7 1l6 4v6l-6 3-6-3V5z M7 7v7M1 5l6 2 6-2" fill="none" stroke="#666" /></Svg>
        </Quick>
        <QuickSep />
        <Quick $w={20}>
          <Svg w={16} h={15}><ellipse cx="9" cy="9" rx="6" ry="4" fill="none" stroke="#777" /><path d="M2 1v13h8" fill="none" stroke="#1fb03a" /><path d="M2 8l6 6" stroke="#e02020" /></Svg>
        </Quick>
        <Quick $w={16}><Caret /></Quick>
        <QuickSep />
        <Quick $w={26}>
          <Svg w={16} h={12}><circle cx="11" cy="5" r="4" fill="none" stroke="#aaa" strokeWidth="2" /><circle cx="5" cy="8" r="3" fill="#888" /></Svg>
        </Quick>
        <QuickSep />
        <Quick $w={26}>
          <Svg w={14} h={15}><path d="M1 1h12v13H1z M1 5h12 M5 9h8v5H5z" fill="none" stroke="#aaa" /></Svg>
        </Quick>
        <Quick $w={14}>
          <Svg w={15} h={15}><path d="M1 1h13v13H1z M1 4h13" fill="none" stroke="#ccc" /></Svg>
        </Quick>
        <Quick $w={26} $color="#ccc">窗口</Quick>
        <Quick $w={10}><Caret /></Quick>
        <Quick $w={14}><Caret /></Quick>
        <AppTitle>NX - 建模</AppTitle>
        <TinyMeter />
        <RightTitle>
          <Brand>SIEMENS</Brand>
          <WinBtn><Minus size={11} strokeWidth={3} /></WinBtn>
          <WinBtn><Copy size={11} strokeWidth={1.6} /></WinBtn>
          <WinBtn $close><X size={15} strokeWidth={2.4} /></WinBtn>
        </RightTitle>
      </TitleBar>

      <TabRow>
        <FileTab>文件(F)</FileTab>
        <Tab $active $ml={5} $w={50}>装配</Tab>
        <Tab>曲线</Tab>
        <Tab>主页</Tab>
        <Tab>分析</Tab>
        <Tab>视图</Tab>
        <Tab>渲染</Tab>
        <Tab>工具</Tab>
        <Tab $w={73}>应用模块</Tab>
        <Tab $w={48}>选择</Tab>
        <Tab $w={75}>电极设计</Tab>
      </TabRow>
      <SearchCmd>查找命令</SearchCmd>
      <Upload>
        <UploadLogo>
          <Svg w={19} h={14}><g fill="none" stroke="#fff" strokeWidth="2.2"><circle cx="9.5" cy="4.5" r="3" /><circle cx="5" cy="9.5" r="3" /><circle cx="14" cy="9.5" r="3" /></g></Svg>
        </UploadLogo>
        <UploadText>拖拽上传</UploadText>
      </Upload>
      <Corner $x={1635}>
        <Svg w={15} h={15}><path d="M1 4V1h3M11 1h3v3M14 11v3h-3M4 14H1v-3" fill="none" stroke="#bbb" /></Svg>
      </Corner>
      <Corner $x={1658}><ChevronUp size={20} strokeWidth={1.2} /></Corner>
      <Corner $x={1681}>
        <Svg w={15} h={15}><circle cx="7.5" cy="7.5" r="6.5" fill="none" stroke="#bbb" /><path d="M5.5 6c0-3 4-3 4 0 0 1.5-2 1.5-2 3.3M7.5 11v1" fill="none" stroke="#bbb" /></Svg>
      </Corner>
      <Corner $x={1705}>
        <Svg w={13} h={13}><circle cx="6.5" cy="6.5" r="6" fill="#888" /></Svg>
      </Corner>

      <Ribbon>
        <RibbonGroup w={238} label="基本" pl={8} pr={18}>
          <Big icon="add" label="添加组件" />
          <Big icon="newc" label="新建组件" />
          <SmallCol $w={118} $ml={4} $pt={1} $gap={4}>
            <Small icon="parent" label="新建装配父级" h={28} gap={7} />
            <Small icon="dmu" label="新建 DMU 工作集" h={28} gap={7} />
          </SmallCol>
        </RibbonGroup>
        <RibbonGroup w={190} label="位置" pl={7} pr={17}>
          <Big icon="move" label="移动组件" />
          <Big icon="cons" label="装配约束" />
          <Big icon="layout" label="布置" w={38} />
          <Big icon="more1" label="更多" w={44} more />
        </RibbonGroup>
        <RibbonGroup w={121} label="组件" pl={9} pr={15}>
          <SmallCol $w={72}>
            <Small icon="array" label="阵列组件" />
            <Small icon="mirror" label="镜像装配" />
            <Small icon="uniq" label="设为唯一" />
          </SmallCol>
          <Big icon="more2" label="更多" w={36} more />
        </RibbonGroup>
        <RibbonGroup w={132} label="关联" pl={2} pr={4}>
          <Big icon="ref" label="引用集" w={50} />
          <Big icon="show" label="仅显示" w={30} />
          <Big icon="show" label="更多" w={56} more />
        </RibbonGroup>
        <RibbonGroup w={218} label="部件间链接" pl={8} pr={15}>
          <Big icon="wave" label={"WAVE\n几何链接"} w={48} />
          <SmallCol $w={119} $ml={5}>
            <Small icon="assoc" label="关联管理器" />
            <Small icon="wavei" label="WAVE 接口链接器" />
            <Small icon="iface" label="接口" />
          </SmallCol>
          <Big icon="chain" label="更多" w={34} more />
        </RibbonGroup>
        <RibbonGroup w={205} label="间隙" pl={5} pr={13}>
          <Big icon="newset" label="新建集" w={44} />
          <Big icon="calc" label="执行分析" w={46} />
          <Big icon="browse" label="间隙浏览器" w={66} />
          <Big icon="clear" label="更多" w={46} more />
        </RibbonGroup>
        <RibbonGroup w={172} label="爆炸视图" pl={8} pr={3}>
          <BigTool $w={48}>
            <BigIcon />
            <BigLabel>新建爆炸</BigLabel>
          </BigTool>
          <SmallCol $w={72} $ml={4}>
            <Small icon="edit" label="编辑爆炸" dim />
            <Small icon="trace" label="追踪线" />
            <Small icon="auto" label="自动爆炸" dim />
          </SmallCol>
          <Big icon="cubes" label="更多" w={36} more />
        </RibbonGroup>
        <RibbonGroup w={50} label="序列" pr={12}>
          <Big icon="seq" label="序列" />
        </RibbonGroup>
        <RibbonEnd><Caret $color="#222" /></RibbonEnd>
        <Gauge>
          <Svg w={58} h={58}>
            <circle cx="29" cy="29" r="28" fill="#f4f4f4" />
            <circle cx="29" cy="29" r="25" fill="#fff" stroke="#777" strokeWidth="2.5" />
            <circle cx="29" cy="29" r="25" fill="none" stroke="#35d36b" strokeWidth="3.5" pathLength="100" strokeDasharray="76 24" transform="rotate(-88 29 29)" />
          </Svg>
          <GaugeNum>39<small>%</small></GaugeNum>
          <GaugeTemp>
            <Svg w={6} h={11}><path d="M2 1h2v6a2.6 2.6 0 1 1-2 0z" fill="#f5a623" /></Svg>
            52°C
          </GaugeTemp>
        </Gauge>
      </Ribbon>

      <FilterBar>
        <MenuBtn>
          <Svg w={10} h={9}><path d="M0 1h10M0 4.5h10M0 8h10" stroke="#444" /></Svg>
          <MenuName>菜单(<u>M</u>)</MenuName>
          <Caret $color="#333" />
        </MenuBtn>
        <Combo $w={146} $mr={10}>无选择过滤器<ComboBtn><Caret $color="#111" /></ComboBtn></Combo>
        <Combo $w={154}>整个装配<ComboBtn><Caret $color="#111" /></ComboBtn></Combo>
        <SelectBtn>
          <Svg w={12} h={17}><path d="M1 4l5-3 5 3v10l-5 3-5-3z" fill="#f08a1c" stroke="#999" /><path d="M1 4l5 3 5-3-5-3z" fill="#e4e4e4" stroke="#888" /></Svg>
        </SelectBtn>
        <FilterIcon $w={22} $op={0.6}>{SMALL.assoc}</FilterIcon>
        <FilterIcon $w={30}>{SMALL.edit}<Caret $color="#222" /></FilterIcon>
        <FilterIcon $w={26} $op={0.6}>
          <Svg w={14} h={15}><path d="M1 1h12L8 7v6M6 7L1 1" fill="none" stroke="#777" /></Svg>
        </FilterIcon>
        <FilterIcon $w={18} $op={0.6}>
          <Svg w={14} h={15}><path d="M2 1H1v13h1M12 1h1v13h-1" fill="none" stroke="#777" /><circle cx="7" cy="8" r="3" fill="#888" /></Svg>
        </FilterIcon>
        <FilterIcon $w={28}>
          <Svg w={15} h={15}><polygon points="1,4 7,1 13,4 13,10 7,13 1,10" fill="none" stroke="#ee8a2a" /><path d="M11 7v8M7 11h8" stroke="#222" /></Svg>
        </FilterIcon>
        <FilterIcon $w={30}>
          <Svg w={15} h={15}><rect x="1" y="1" width="9" height="9" fill="none" stroke="#ee8a2a" /><path d="M10 6v9M6 10h9" stroke="#222" /></Svg>
          <Caret $color="#222" />
        </FilterIcon>
        <FilterIcon $w={30} $op={0.7}>
          <Svg w={14} h={14}><circle cx="7" cy="7" r="6" fill="#ddd" stroke="#999" /><path d="M2 6l10 3" stroke="#ee8a2a" strokeWidth="1.5" /></Svg>
        </FilterIcon>
        <FilterIcon $w={14} $op={0.7}>
          <Svg w={14} h={14}><polygon points="2,4 7,1 12,4 12,10 7,13 2,10" fill="#e4e4e4" stroke="#999" /><path d="M7 1v12M12 4v6" stroke="#ee8a2a" /></Svg>
        </FilterIcon>
        <BarSep />
        <BarEnd><Caret $color="#222" /></BarEnd>
      </FilterBar>

      <Main>
        <Rail>
          <RailGear>
            <Svg w={14} h={14}><circle cx="7" cy="7" r="4" fill="none" stroke="#222" strokeWidth="2" /><path d="M7 0v3M7 11v3M0 7h3M11 7h3M2 2l2 2M10 10l2 2M12 2l-2 2M4 10l-2 2" stroke="#222" /></Svg>
          </RailGear>
          {RAIL.map((t, i) => (
            <RailTab key={i} $h={t.h} $mt={t.mt} $active={t.active}>{t.icon}</RailTab>
          ))}
        </Rail>

        <NavPanel>
          <PanelHead>
            部件导航器
            <RestoreBox />
          </PanelHead>
          <TreeBox>
            <TreeHead>
              <HeadCell>名称<SortUp /></HeadCell>
              <HeadCell>当</HeadCell>
              <HeadCell>最</HeadCell>
              <HeadCell>附注</HeadCell>
              <div />
            </TreeHead>
            <TreeBody>
              <RowList>
                {rows.map((r, i) => (
                  <TreeRow key={i} row={r} odd={i % 2 === 1} />
                ))}
              </RowList>
              <ScrollBar>
                <ScrollArrow><ChevronUp size={12} strokeWidth={2.4} /></ScrollArrow>
                <ScrollThumb />
                <ScrollFill />
                <ScrollArrow><ChevronDown size={12} strokeWidth={2.4} /></ScrollArrow>
              </ScrollBar>
            </TreeBody>
          </TreeBox>
          <Sash>
            <SashLine />
            <SashGrip />
            <SashLine />
          </Sash>
          {["相关性", "细节", "预览"].map((t) => (
            <Fold key={t}>
              {t}
              <FoldChevron><ChevronDown size={15} strokeWidth={3} /></FoldChevron>
            </Fold>
          ))}
        </NavPanel>

        <Center>
          <DocStrip>
            <DocTab>
              <Svg w={13} h={13}><path d="M1 9l5-7 6 6-3 4z" fill="#ccc" /></Svg>
              LUOWEN.prt
              <Svg w={11} h={12}><path d="M1 3v8h8V6M4 1h6v6" fill="none" stroke="#eee" /></Svg>
              <X size={12} strokeWidth={3} />
            </DocTab>
          </DocStrip>
          <Viewport>
            <Drawing width="1254" height="730" viewBox="441 184 1254 730">
              <g fill="none" strokeWidth="2">
                <path d="M441 457C520 447 600 445 685 445C820 445 980 458 1078 476C1120 486 1165 498 1187 517" stroke="#f010e8" />
                <path d="M441 522C520 531 600 535 685 535C790 535 890 530 968 518" stroke="#f010e8" />
                <path d="M968 518C1030 508 1080 498 1080 484C1081 481 1079 478 1078 476" stroke="#30e840" />
                <path d="M1078 560C1130 552 1165 542 1180 532C1192 525 1192 522 1187 517" stroke="#30e840" />
                <path d="M1177 503L1196 518C1199 523 1197 527 1195 530L1171 546Z" stroke="#3060f0" />
                <path d="M1178 196L1192 203C1199 210 1199 214 1196 221L1171 239Z" stroke="#3060f0" />
                <path d="M1173 184C1182 200 1192 214 1189 224C1186 230 1178 235 1169 241" stroke="#f010e8" />
              </g>
              <polygon points="498,831 522,831 522,855 498,855" fill="#a9b3c2" />
              <line x1="498" y1="808" x2="498" y2="855" stroke="#1530e0" strokeWidth="2" />
              <polygon points="498,808 495,815 501,815" fill="#1530e0" />
              <line x1="499" y1="855" x2="530" y2="855" stroke="#e03030" strokeWidth="1.5" />
              <polygon points="537,855 529,852 529,858" fill="#e03030" />
              <path d="M539 851l7 8M546 851l-7 8" stroke="#e03030" strokeWidth="1" />
              <path d="M490 845l4 9" stroke="#20a040" strokeWidth="1" />
              <circle cx="499" cy="855" r="3.5" fill="#ccc" />
            </Drawing>
            <Subtitle $x={387} $y={591}>所有流过的泪</Subtitle>
            <Activate>
              激活 Windows
              <small>转到“设置”以激活 Windows。</small>
            </Activate>
            <Subtitle $x={1062} $y={642}>所有受过的伤</Subtitle>
          </Viewport>
        </Center>

        <RightBar>
          {RIGHT.map((ic, i) => (
            <RightTool key={i}>{ic}</RightTool>
          ))}
          <RightEnd />
          <Nudge />
        </RightBar>
      </Main>

      <StatusBar>
        选择对象并使用 MB3，或者双击某一对象
        <StatusSep $mr={890} />
      </StatusBar>

      <Taskbar>
        <TaskSlot $w={42}>
          <Svg w={16} h={16}><path d="M0 2.5L6.5 1.5V7.5H0zM7.5 1.4L16 0V7.5H7.5zM0 8.5H6.5V14.5L0 13.5zM7.5 8.5H16V16L7.5 14.6z" fill="#fff" /></Svg>
        </TaskSlot>
        <TaskSlot $w={44}>
          <Svg w={15} h={15}><circle cx="7.5" cy="7.5" r="6" fill="none" stroke="#eee" strokeWidth="1.6" /></Svg>
        </TaskSlot>
        <TaskSlot $w={42}>
          <Svg w={16} h={14}><rect x="2" y="3" width="10" height="8" fill="none" stroke="#ddd" /><path d="M1 0h12M1 14h12M15 3v2M15 9v2" stroke="#ddd" /></Svg>
        </TaskSlot>
        <TaskSlot $w={48}>
          <Svg w={20} h={20}>
            <g fill="#fff">
              <path d="M10 10C5 10 1 7 2 3c2-3 7-2 8 1z" />
              <path d="M10 10c0-5 3-9 7-8 3 2 2 7-1 8z" />
              <path d="M10 10c5 0 9 3 8 7-2 3-7 2-8-1z" />
              <path d="M10 10c0 5-3 9-7 8-3-2-2-7 1-8z" />
            </g>
          </Svg>
        </TaskSlot>
        <SearchBox>
          <SearchIcon>
            <Svg w={18} h={18}><path d="M15 13c-3 4-11 3-12-4C3 2 14 0 15 8v1H4M4 5h10" fill="none" stroke="#2a8ae0" strokeWidth="2.4" /></Svg>
            <Caret $color="#aaa" />
          </SearchIcon>
          31省新增确诊1例
          <SearchGo>搜索一下</SearchGo>
        </SearchBox>
        <TaskSlot $w={44}>
          <YoudaoTile>有道</YoudaoTile>
        </TaskSlot>
        <TaskSlot $w={44}>
          <Svg w={22} h={22}><rect x="1" y="1" width="20" height="20" rx="3" fill="#e8eefa" /><path d="M18 3L5 9l6 2 1 7z" fill="#4a7ae0" /></Svg>
        </TaskSlot>
        <TaskSlot $w={44}>
          <Svg w={22} h={22}><path d="M3 2l17 9-17 9z" fill="#24b050" /><path d="M3 2l17 9-9 0z" fill="#f0a020" /><path d="M3 20l17-9-9 0z" fill="#2a8ae0" /></Svg>
        </TaskSlot>
        <TaskSlot $w={44} $open>
          <Svg w={24} h={24}><circle cx="12" cy="14" r="8" fill="#2a70d0" /><path d="M7 2l9 5-4 9z" fill="#e02040" /><path d="M3 19c6 2 14-1 18-8" fill="none" stroke="#f0c020" strokeWidth="2" /></Svg>
        </TaskSlot>
        <TaskSlot $w={44} $open>
          <Svg w={22} h={22}><circle cx="11" cy="11" r="9" fill="#90d050" stroke="#4a9a30" /><path d="M6 11h10M7 7c3-2 7-2 9 2M7 15c3 2 7 2 9-1" fill="none" stroke="#fff" strokeWidth="1.6" /></Svg>
        </TaskSlot>
        <TempBlock>
          59℃
          <br />
          CPU温度
        </TempBlock>
        <TaskSlot $w={22}><Svg w={14} h={16}><circle cx="7" cy="4" r="3" fill="#bbb" /><path d="M1 15c0-8 12-8 12 0z" fill="#3a9a8a" /></Svg></TaskSlot>
        <TaskSlot $w={21}><Svg w={15} h={15}><path d="M2 1l12 6.5L2 14z" fill="#24b0a0" /><path d="M2 1l6 6.5L2 14z" fill="#f0a020" /></Svg></TaskSlot>
        <TaskSlot $w={22}><Svg w={15} h={15}><rect width="15" height="15" rx="3" fill="#fff" /><circle cx="7.5" cy="7" r="3" fill="none" stroke="#2a8ae0" strokeWidth="1.5" /></Svg></TaskSlot>
        <TaskSlot $w={21}><Svg w={15} h={15}><rect width="15" height="15" rx="3" fill="#1e8cf0" /><circle cx="7.5" cy="7.5" r="4" fill="none" stroke="#fff" /></Svg></TaskSlot>
        <TaskSlot $w={22}><Svg w={15} h={15}><circle cx="6" cy="6" r="4" fill="#ddd" /><path d="M6 6l8 8" stroke="#999" strokeWidth="2" /></Svg></TaskSlot>
        <TaskSlot $w={22}><Svg w={15} h={15}><circle cx="7" cy="7" r="6" fill="#30c050" /><rect x="8" y="8" width="7" height="7" fill="#f0b020" /></Svg></TaskSlot>
        <TaskSlot $w={22} $ml={20}><Svg w={16} h={15}><path d="M4 1h11v9H4zM7 13h6M10 10v3M1 7l4-4" fill="none" stroke="#eee" /></Svg></TaskSlot>
        <TaskSlot $w={21}><Svg w={15} h={14}><path d="M1 5h3l4-4v12L4 9H1z" fill="none" stroke="#eee" /><path d="M10 4c2 2 2 4 0 6M12 2c3 3 3 7 0 10" fill="none" stroke="#eee" /></Svg></TaskSlot>
        <TaskSlot $w={24}><Svg w={15} h={13}><rect width="15" height="13" fill="#222" /><path d="M3 7c3-5 7-4 9 0-3 3-6 3-9 0z" fill="#76b900" /></Svg></TaskSlot>
        <TaskSlot $w={28}><Svg w={15} h={15}><rect width="15" height="15" rx="3" fill="#f04a20" /><path d="M10 4H6v3h3v4H5" fill="none" stroke="#fff" strokeWidth="1.5" /></Svg></TaskSlot>
        <ClockBlock>
          23:03
          <br />
          2020/5/27
        </ClockBlock>
        <TaskSlot $w={32}>
          <Svg w={16} h={15}><path d="M1 1h14v10H9l-3 3v-3H1z" fill="none" stroke="#eee" /></Svg>
        </TaskSlot>
      </Taskbar>

      <Mark>
        <Svg w={72} h={76}>
          <polygon points="36,1 71,20 71,57 36,75 1,57 1,20" fill="#4a9ee0" opacity=".62" />
          <polygon points="36,20 54,31 54,51 36,61 18,51 18,31" fill="#a8d4f0" opacity=".6" />
          <path d="M36 20v20M18 31l18 9 18-9" fill="none" stroke="#fff" opacity=".55" strokeWidth="2" />
          <path d="M1 20C12 8 24 6 36 10M71 57C60 68 48 70 36 66" fill="none" stroke="#1a6aa0" strokeWidth="3" opacity=".55" />
        </Svg>
        <MarkText>
          3D世界网
          <small>WWW.3DSJW.COM</small>
        </MarkText>
      </Mark>
    </Page>
  );
}
